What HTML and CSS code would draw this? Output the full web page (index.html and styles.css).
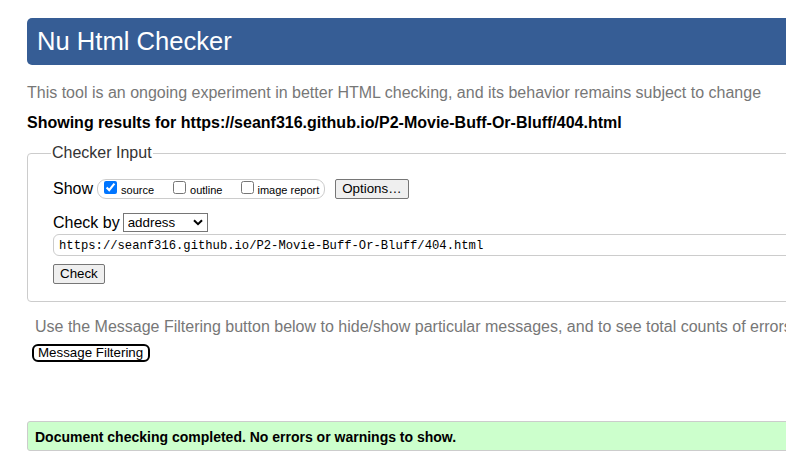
FILE: index.html
```html
<!DOCTYPE html>
<html lang="en">
<head>
<meta charset="utf-8">
<title>Showing results for https://seanf316.github.io/P2-Movie-Buff-Or-Bluff/404.html - Nu Html Checker</title>
<link rel="stylesheet" href="styles.css">
</head>
<body>
<div class="page">
  <h1 class="title">Nu Html Checker</h1>
  <p class="intro">This tool is an ongoing experiment in better HTML checking, and its behavior remains subject to change</p>
  <p class="results-for">Showing results for https://seanf316.github.io/P2-Movie-Buff-Or-Bluff/404.html</p>

  <form class="checker-form">
    <fieldset class="checker-input">
      <legend class="legend">Checker Input</legend>
      <div class="row row-show">
        <span class="row-label">Show</span>
        <span class="options-group">
          <label class="opt"><input type="checkbox" class="cb" checked><span class="opt-text">source</span></label>
          <label class="opt"><input type="checkbox" class="cb"><span class="opt-text">outline</span></label>
          <label class="opt opt-last"><input type="checkbox" class="cb"><span class="opt-text">image report</span></label>
        </span>
        <button type="button" class="btn btn-options">Options…</button>
      </div>
      <div class="row row-checkby">
        <span class="row-label">Check by</span>
        <span class="select-wrap">
          <select class="select">
            <option>address</option>
            <option>file upload</option>
            <option>text input</option>
          </select>
          <svg class="chevron" width="10" height="7" viewBox="0 0 10 7" aria-hidden="true"><path d="M1 1.2 L5 5.2 L9 1.2" fill="none" stroke="#000" stroke-width="2"/></svg>
        </span>
      </div>
      <div class="row row-url">
        <input type="text" class="url" value="https://seanf316.github.io/P2-Movie-Buff-Or-Bluff/404.html">
      </div>
      <div class="row row-submit">
        <button type="button" class="btn">Check</button>
      </div>
    </fieldset>
  </form>

  <p class="filter-note">Use the Message Filtering button below to hide/show particular messages, and to see total counts of errors and warnings.</p>
  <button type="button" class="btn-filter">Message Filtering</button>

  <div class="success">Document checking completed. No errors or warnings to show.</div>
</div>
</body>
</html>
```

FILE: styles.css
```css
html {
  overflow: hidden;
}

body {
  margin: 0;
  font-family: "Liberation Sans", Arial, sans-serif;
  color: #000;
  background: #fff;
}

.page {
  width: 1100px;
  padding: 18px 0 0 27px;
}

.title {
  margin: 0;
  height: 47px;
  padding-left: 10px;
  background: #365d95;
  color: #fff;
  font-size: 25.6px;
  font-weight: normal;
  line-height: 47px;
  border-radius: 5px 0 0 5px;
}

.intro {
  margin: 18px 0 0;
  font-size: 16px;
  line-height: 20px;
  color: #777;
  white-space: nowrap;
}

.results-for {
  margin: 10px 0 0;
  font-size: 16px;
  line-height: 20px;
  font-weight: bold;
  white-space: nowrap;
}

.checker-form {
  margin: 11px 0 0;
}

.checker-input {
  margin: 0;
  padding: 17px 0 17px 25px;
  border: 1px solid #ccc;
  border-radius: 4px;
  min-width: 0;
}

.legend {
  padding: 0 1px;
  margin-left: -2px;
  font-size: 16px;
  line-height: 18px;
  color: #333;
}

.row {
  display: flex;
  align-items: center;
}

.row-show {
  height: 20px;
}

.row-checkby {
  height: 19px;
  margin-top: 14px;
}

.row-url {
  height: 22px;
  margin-top: 2px;
}

.row-submit {
  height: 20px;
  margin-top: 8px;
}

.row-label {
  font-size: 16px;
  line-height: 20px;
}

.row-show .row-label {
  margin-right: 4px;
}

.row-checkby .row-label {
  margin-right: 3px;
}

.options-group {
  display: flex;
  align-items: flex-start;
  gap: 19px;
  height: 17px;
  padding: 1px 5px 0 6px;
  border: 1px solid #ccc;
  border-radius: 9px;
}

.opt {
  display: flex;
  align-items: baseline;
  font-size: 11px;
  line-height: 13px;
}

.cb {
  margin: 0 4px 0 0;
  width: 13px;
  height: 13px;
}

.opt-last .cb {
  margin-right: 3px;
}

.btn {
  box-sizing: border-box;
  height: 20px;
  padding: 0 6px;
  font-family: "Liberation Sans", Arial, sans-serif;
  font-size: 13.333px;
  line-height: 16px;
  color: #000;
  background: #efefef;
  border: 1px solid #767676;
  border-radius: 2px;
}

.btn-options {
  margin-left: 10px;
}

.select-wrap {
  position: relative;
  display: inline-block;
  height: 19px;
}

.select {
  -webkit-appearance: none;
  appearance: none;
  box-sizing: border-box;
  width: 85px;
  height: 19px;
  margin: 0;
  padding: 0 0 0 4px;
  font-family: "Liberation Sans", Arial, sans-serif;
  font-size: 13.333px;
  line-height: 17px;
  color: #000;
  background: #fff;
  border: 1px solid #767676;
  border-radius: 0;
}

.chevron {
  position: absolute;
  right: 5px;
  top: 6px;
  pointer-events: none;
}

.url {
  box-sizing: border-box;
  width: 900px;
  height: 22px;
  margin: 0;
  padding: 2px 5px 0;
  font-family: "Liberation Mono", "DejaVu Sans Mono", monospace;
  font-size: 12.2px;
  color: #000;
  border: 1px solid #ccc;
  border-radius: 6px;
  outline: none;
}

.filter-note {
  margin: 15px 0 0;
  padding-left: 8px;
  font-size: 16px;
  line-height: 20px;
  color: #777;
  white-space: nowrap;
}

.btn-filter {
  display: block;
  box-sizing: border-box;
  height: 18px;
  margin: 7px 0 0 5px;
  padding: 0 5px 0 4px;
  font-family: "Liberation Sans", Arial, sans-serif;
  font-size: 13.333px;
  line-height: 14px;
  color: #000;
  background: #fff;
  border: 2px solid #000;
  border-radius: 6px;
}

.success {
  margin-top: 59px;
  height: 30px;
  box-sizing: border-box;
  padding: 2px 0 0 7px;
  font-size: 14px;
  font-weight: bold;
  line-height: 26px;
  background: #ccffcc;
  border: 1px solid #ccc;
  border-radius: 3px;
  white-space: nowrap;
}
```
